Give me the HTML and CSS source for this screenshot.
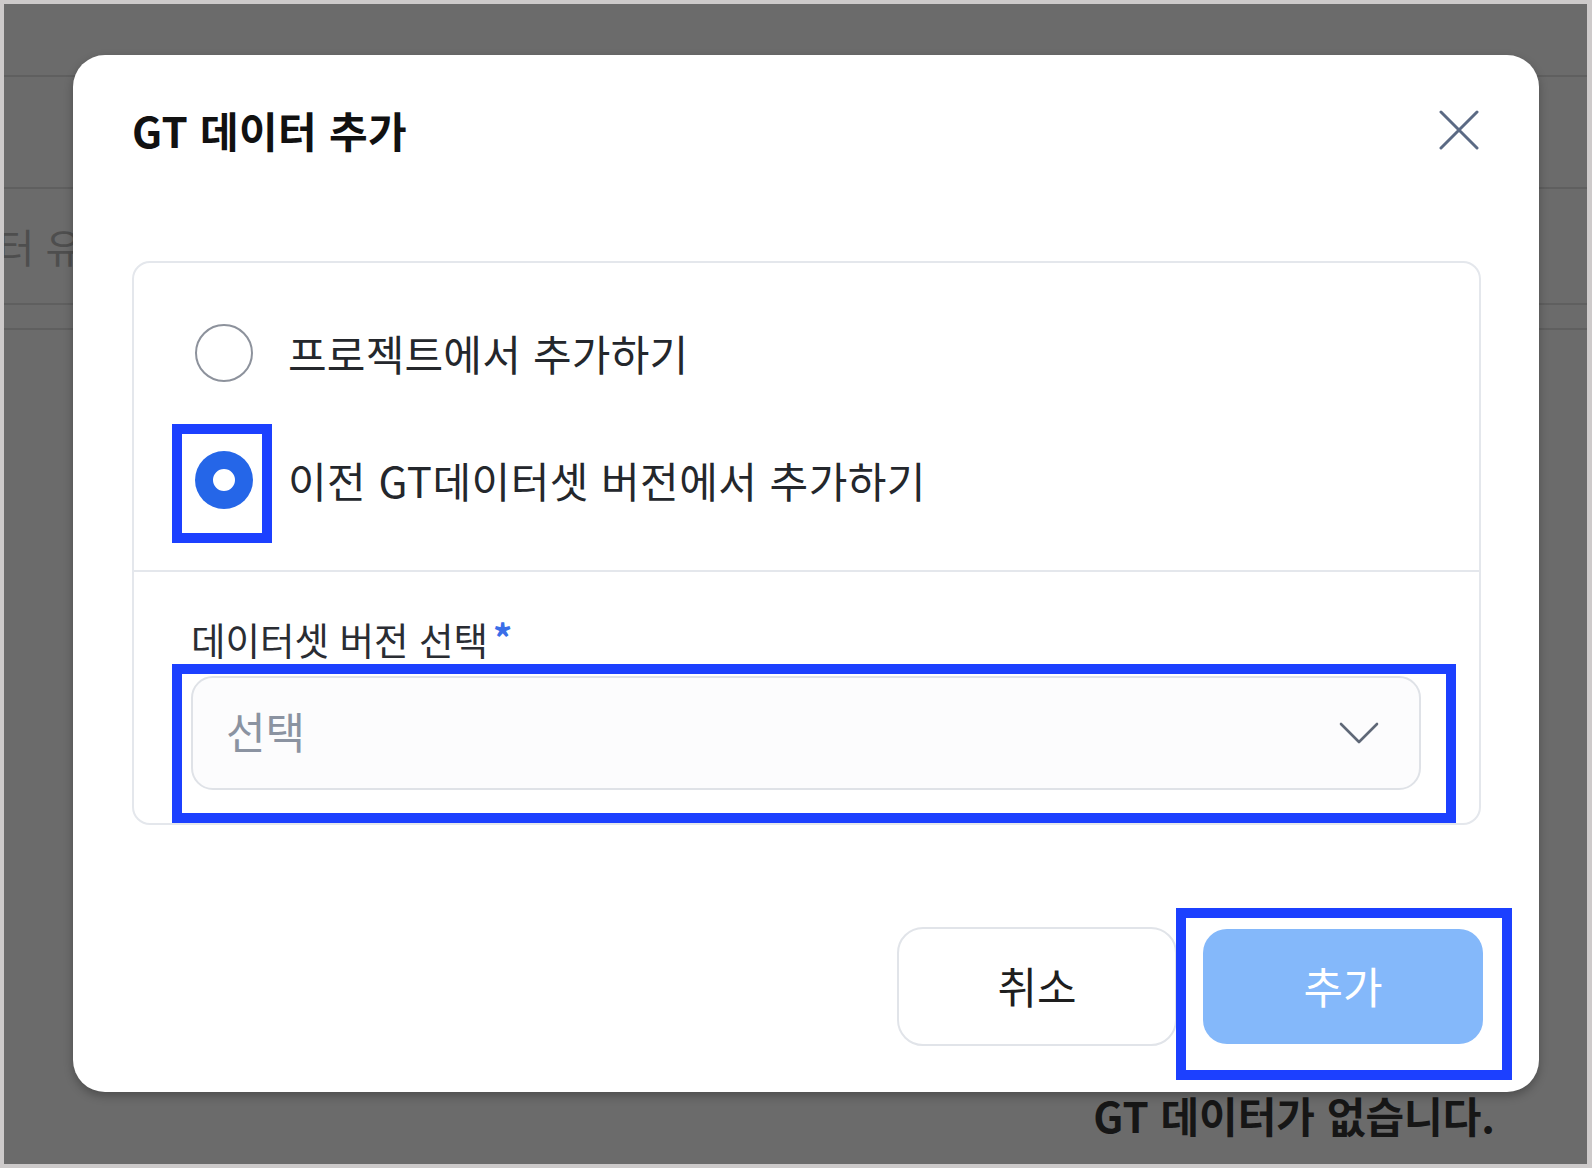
FILE: index.html
```html
<!DOCTYPE html>
<html lang="ko">
<head>
<meta charset="utf-8">
<title>GT 데이터 추가</title>
<link rel="stylesheet" href="styles.css">
</head>
<body>
<div class="screen">
  <div class="backdrop">
    <div class="bg-row bg-row--head"></div>
    <div class="bg-row bg-row--tabs"></div>
    <div class="bg-row bg-row--filter"><span class="bg-label">데이터 유형</span></div>
    <div class="bg-row bg-row--thin"></div>
    <div class="bg-spacer"></div>
    <div class="bg-empty">GT 데이터가 없습니다.</div>
  </div>

  <div class="modal">
    <header class="modal-header">
      <h2 class="modal-title">GT 데이터 추가</h2>
      <button class="close-btn" aria-label="닫기">
        <svg width="40" height="40" viewBox="0 0 40 40"><path d="M2 2 L38 38 M38 2 L2 38" stroke="#5b6a84" stroke-width="3" stroke-linecap="round" fill="none"/></svg>
      </button>
    </header>

    <div class="option-card">
      <div class="option-list">
        <label class="option"><span class="radio"></span><span class="option-text">프로젝트에서 추가하기</span></label>
        <label class="option"><span class="radio radio--checked"></span><span class="option-text option-text--wide">이전 GT데이터셋 버전에서 추가하기</span></label>
      </div>
      <div class="option-detail">
        <div class="field-label">데이터셋 버전 선택<span class="required">*</span></div>
        <div class="select">
          <span class="select-placeholder">선택</span>
          <svg class="chevron" width="40" height="22" viewBox="0 0 40 22"><path d="M2 2 L20 20 L38 2" stroke="#5f6877" stroke-width="2.6" stroke-linecap="round" stroke-linejoin="round" fill="none"/></svg>
        </div>
      </div>
    </div>

    <footer class="modal-footer">
      <button class="btn btn--cancel">취소</button>
      <button class="btn btn--primary">추가</button>
    </footer>
  </div>

  <div class="annot annot--radio"></div>
  <div class="annot annot--select"></div>
  <div class="annot annot--submit"></div>
</div>
</body>
</html>
```

FILE: styles.css
```css
* { box-sizing: border-box; }

html, body {
  margin: 0;
  padding: 0;
}

body {
  width: 1592px;
  height: 1168px;
  overflow: hidden;
  background: #cdcaca;
  font-family: "Noto Sans CJK KR", "Noto Sans", sans-serif;
}

.screen {
  position: relative;
  width: 1592px;
  height: 1168px;
  border: 4px solid #cdcaca;
  border-right-width: 5px;
  background: #6b6b6b;
}

/* ---------- backdrop page (dimmed) ---------- */
.backdrop {
  display: flex;
  flex-direction: column;
  height: 100%;
  overflow: hidden;
}

.bg-row {
  flex: none;
  border-bottom: 2px solid #5f5f5f;
}

.bg-row--head { height: 73px; }
.bg-row--tabs { height: 112px; }
.bg-row--filter {
  height: 116px;
  display: flex;
  align-items: center;
  overflow: hidden;
}
.bg-row--thin { height: 25px; }

.bg-label {
  margin-left: -80px;
  font-size: 40px;
  line-height: 48px;
  color: #4e4e4e;
  white-space: nowrap;
}

.bg-spacer { flex: 1; }

.bg-empty {
  flex: none;
  text-align: right;
  padding: 0 92px 25px 0;
  font-size: 42px;
  line-height: 48px;
  font-weight: 700;
  color: #161616;
}

/* ---------- modal ---------- */
.modal {
  position: absolute;
  left: 69px;
  top: 51px;
  width: 1466px;
  height: 1037px;
  background: #ffffff;
  border-radius: 32px;
  box-shadow: 0 4px 10px rgba(0, 0, 0, 0.28);
  padding: 0 58px 44px 59px;
  display: flex;
  flex-direction: column;
}

.modal-header {
  margin-top: 47px;
  height: 56px;
  display: flex;
  align-items: center;
  justify-content: space-between;
}

.modal-title {
  margin: 0;
  font-size: 42px;
  line-height: 56px;
  font-weight: 700;
  letter-spacing: 0.3px;
  color: #111111;
}

.close-btn {
  width: 40px;
  height: 40px;
  padding: 0;
  margin-right: 2px;
  border: none;
  background: none;
  display: flex;
}

/* ---------- option card ---------- */
.option-card {
  margin-top: 103px;
  border: 2px solid #e4e7ec;
  border-radius: 18px;
  display: flex;
  flex-direction: column;
}

.option-list {
  padding: 60px 0 60px 61px;
  display: flex;
  flex-direction: column;
  gap: 67px;
  border-bottom: 2px solid #e4e7ec;
}

.option {
  height: 60px;
  display: flex;
  align-items: center;
  gap: 35px;
}

.radio {
  flex: none;
  width: 58px;
  height: 58px;
  border-radius: 50%;
  border: 2.5px solid #8d929c;
  background: #ffffff;
}

.radio--checked {
  border: none;
  box-shadow: inset 0 0 0 18px #2566e8;
}

.option-text {
  font-size: 42px;
  line-height: 60px;
  letter-spacing: 0.2px;
  color: #24272c;
  white-space: nowrap;
}

.option-text--wide {
  letter-spacing: 0.45px;
}

.option-detail {
  padding: 45px 58px 33px 57px;
  display: flex;
  flex-direction: column;
  gap: 15px;
}

.field-label {
  display: flex;
  align-items: center;
  font-size: 37.5px;
  line-height: 44px;
  letter-spacing: 0;
  color: #2a2d33;
}

.required {
  margin-left: 5px;
  margin-top: -4px;
  color: #3a6ee8;
  font-size: 38px;
  font-weight: 700;
}

.select {
  height: 114px;
  border: 2px solid #dfe2e7;
  border-radius: 22px;
  background: #fcfcfd;
  padding: 0 40px 6px 33px;
  display: flex;
  align-items: center;
  justify-content: space-between;
}

.select-placeholder {
  font-size: 43px;
  line-height: 50px;
  color: #8b93a1;
}

.chevron {
  flex: none;
  margin-top: 6px;
}

/* ---------- footer ---------- */
.modal-footer {
  margin-top: 102px;
  margin-right: -2px;
  display: flex;
  justify-content: flex-end;
  align-items: center;
  gap: 26px;
}

.btn {
  width: 280px;
  padding: 0 0 4px;
  font-family: inherit;
  font-size: 43px;
  cursor: pointer;
}

.btn--cancel {
  height: 119px;
  border: 2px solid #e1e4e9;
  border-radius: 26px;
  background: #ffffff;
  color: #1e1e1e;
}

.btn--primary {
  height: 115px;
  border: none;
  border-radius: 24px;
  background: #84b8fa;
  color: #ffffff;
}

/* ---------- annotation boxes ---------- */
.annot {
  position: absolute;
  border: 10px solid #1c40ff;
  pointer-events: none;
}

.annot--radio {
  left: 168px;
  top: 420px;
  width: 100px;
  height: 119px;
}

.annot--select {
  left: 168px;
  top: 660px;
  width: 1284px;
  height: 159px;
}

.annot--submit {
  left: 1172px;
  top: 904px;
  width: 336px;
  height: 172px;
}
```
